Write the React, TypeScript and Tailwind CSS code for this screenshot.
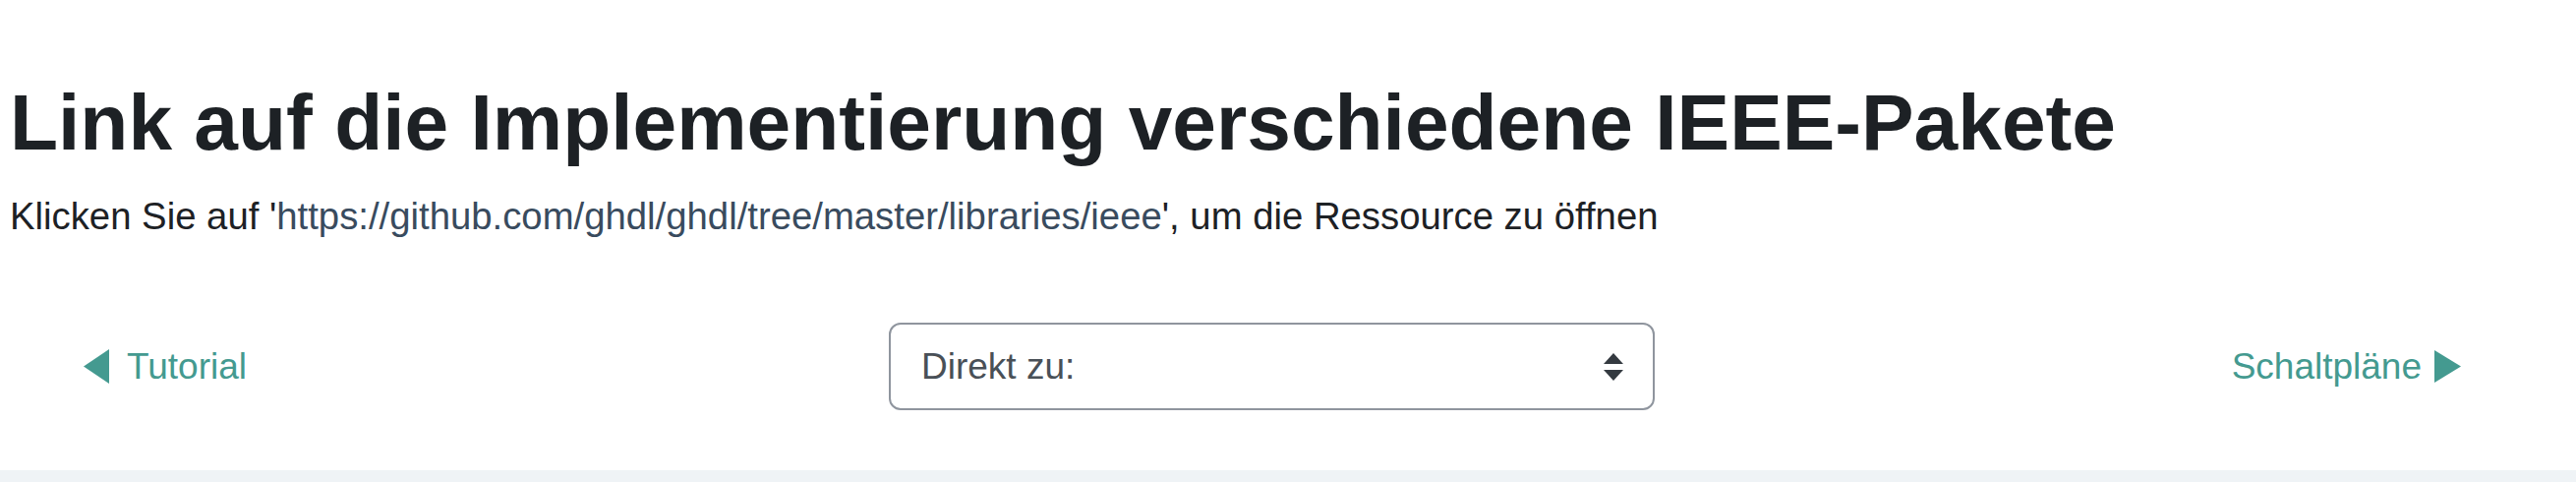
import React from 'react';

function TriangleLeft() {
    return (
        <svg width="26" height="35" viewBox="0 0 26 35" className="shrink-0">
            <polygon points="26,0 26,35 0,17.5" fill="#449a90" />
        </svg>
    );
}

function TriangleRight() {
    return (
        <svg width="27" height="33" viewBox="0 0 27 33" className="shrink-0">
            <polygon points="0,0 27,16.5 0,33" fill="#449a90" />
        </svg>
    );
}

export default function App() {
    return (
        <div
            className="flex flex-col h-[490px] w-[2620px] bg-white text-[#1d2125] overflow-hidden"
            style={{ fontFamily: '"Liberation Sans", Arial, Helvetica, sans-serif' }}
        >
            {/* Titel und Beschreibung */}
            <div className="pl-[10px] pt-[76px]">
                <h2 className="text-[80.3px] leading-[96px] font-bold text-[#1d2125]">
                    Link auf die Implementierung verschiedene IEEE-Pakete
                </h2>
                <p className="mt-[19px] text-[38.3px] leading-[57px]">
                    Klicken Sie auf '
                    <a href="#" className="text-[#394b5e]">
                        https://github.com/ghdl/ghdl/tree/master/libraries/ieee
                    </a>
                    ', um die Ressource zu öffnen
                </p>
            </div>

            {/* Aktivitätsnavigation */}
            <div className="flex items-center mt-[79px] h-[91px]">
                <div className="w-[904px] pl-[85px]">
                    <a href="#" className="inline-flex items-center gap-[18px] text-[37px] text-[#449a90]">
                        <TriangleLeft />
                        <span>Tutorial</span>
                    </a>
                </div>
                <div className="relative w-[779px] h-[89px] border-2 border-[#8f959e] rounded-[12px] flex items-center pl-[31px]">
                    <span className="text-[37px] text-[#495057]">Direkt zu:</span>
                    <div className="absolute right-[30px] top-1/2 -translate-y-1/2 flex flex-col gap-[6px]">
                        <svg width="20" height="11" viewBox="0 0 20 11">
                            <polygon points="10,0 20,11 0,11" fill="#343a40" />
                        </svg>
                        <svg width="20" height="11" viewBox="0 0 20 11">
                            <polygon points="0,0 20,0 10,11" fill="#343a40" />
                        </svg>
                    </div>
                </div>
                <div className="flex-1 flex justify-end pr-[117px]">
                    <a href="#" className="inline-flex items-center gap-[13px] text-[37px] text-[#449a90]">
                        <span>Schaltpläne</span>
                        <TriangleRight />
                    </a>
                </div>
            </div>

            <div className="mt-[60px] flex-1 bg-[#eff3f6]" />
        </div>
    );
}
